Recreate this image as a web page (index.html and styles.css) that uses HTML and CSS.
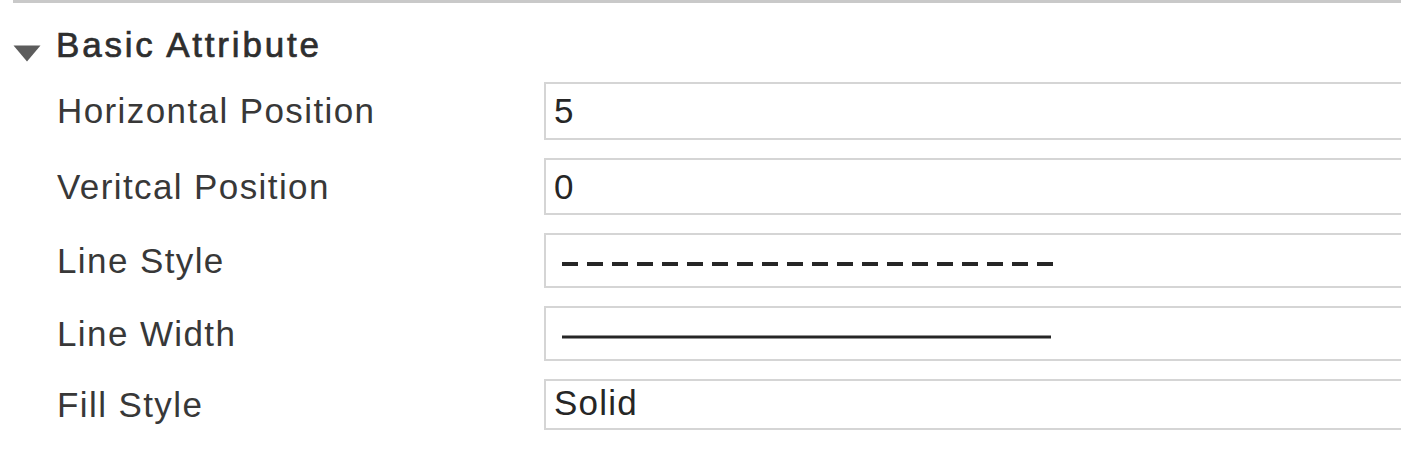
FILE: index.html
```html
<!DOCTYPE html>
<html lang="en">
<head>
<meta charset="utf-8">
<title>Basic Attribute</title>
<link rel="stylesheet" href="styles.css">
</head>
<body>
<div class="panel">
  <div class="top-rule"></div>
  <div class="section-head">
    <svg class="caret" width="28" height="18" viewBox="0 0 28 18" aria-hidden="true">
      <polygon points="0.5,1.5 27.5,1.5 14,17.5" fill="#5c5c5c"/>
    </svg>
    <span class="section-title">Basic Attribute</span>
  </div>
  <div class="rows">
    <div class="row">
      <span class="label">Horizontal Position</span>
      <div class="field field--text">5</div>
    </div>
    <div class="row">
      <span class="label">Veritcal Position</span>
      <div class="field field--text2">0</div>
    </div>
    <div class="row">
      <span class="label">Line Style</span>
      <div class="field field--line">
        <svg class="line-sample" width="492" height="6" viewBox="0 0 492 6" aria-hidden="true">
          <line x1="0" y1="3" x2="491" y2="3" stroke="#262626" stroke-width="3.8" stroke-dasharray="16 9"/>
        </svg>
      </div>
    </div>
    <div class="row">
      <span class="label">Line Width</span>
      <div class="field field--line">
        <svg class="line-sample" width="490" height="6" viewBox="0 0 490 6" aria-hidden="true">
          <line x1="0" y1="3" x2="489" y2="3" stroke="#262626" stroke-width="3.2"/>
        </svg>
      </div>
    </div>
    <div class="row">
      <span class="label">Fill Style</span>
      <div class="field field--select">Solid</div>
    </div>
  </div>
</div>
</body>
</html>
```

FILE: styles.css
```css
html, body {
  margin: 0;
  padding: 0;
  background: #ffffff;
  overflow: hidden;
}

body {
  width: 1401px;
  height: 473px;
  font-family: "Liberation Sans", Arial, sans-serif;
  font-size: 35px;
  color: #333333;
}

.panel {
  display: flex;
  flex-direction: column;
}

.top-rule {
  margin-left: 13px;
  height: 3px;
  background: #c9c9c9;
}

.section-head {
  display: flex;
  align-items: flex-start;
  margin-top: 22px;
  padding-left: 13px;
  gap: 15px;
}

.caret {
  display: block;
  margin-top: 19px;
  flex: 0 0 auto;
}

.section-title {
  line-height: 40px;
  font-weight: normal;
  -webkit-text-stroke: 0.7px #2e2e2e;
  letter-spacing: 2.8px;
  color: #2e2e2e;
}

.rows {
  display: flex;
  flex-direction: column;
  gap: 18px;
  margin-top: 17px;
}

.row {
  display: flex;
  align-items: center;
  padding-left: 57px;
}

.label {
  flex: 0 0 487px;
  line-height: 40px;
  letter-spacing: 1.4px;
  color: #383838;
  white-space: nowrap;
}

.field {
  flex: 0 0 900px;
  box-sizing: border-box;
  border: 2px solid #d5d5d5;
  display: flex;
  align-items: center;
  padding-left: 8px;
  line-height: 40px;
  letter-spacing: 1.2px;
  color: #262626;
  background: #ffffff;
}

.field--text {
  height: 58px;
}

.field--text2 {
  height: 57px;
}

.field--line {
  height: 55px;
  padding-left: 16px;
}

.field--select {
  height: 51px;
  padding-bottom: 4px;
}

.line-sample {
  display: block;
  margin-top: 7px;
}
```
